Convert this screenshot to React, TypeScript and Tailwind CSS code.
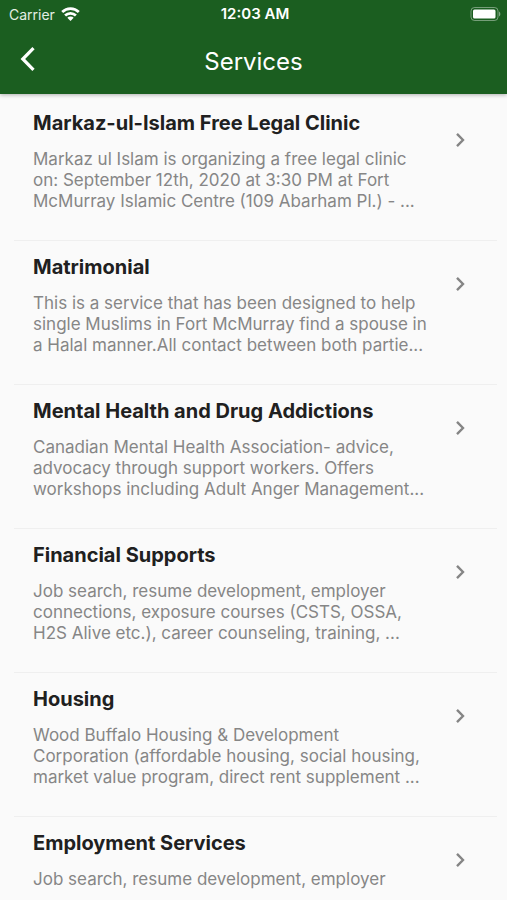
import React from "react";

type Service = { title: string; lines: string[] };

const services: Service[] = [
  {
    title: "Markaz-ul-Islam Free Legal Clinic",
    lines: [
      "Markaz ul Islam is organizing a free legal clinic",
      "on: September 12th, 2020 at 3:30 PM at Fort",
      "McMurray Islamic Centre (109 Abarham Pl.) - ...",
    ],
  },
  {
    title: "Matrimonial",
    lines: [
      "This is a service that has been designed to help",
      "single Muslims in Fort McMurray find a spouse in",
      "a Halal manner.All contact between both partie...",
    ],
  },
  {
    title: "Mental Health and Drug Addictions",
    lines: [
      "Canadian Mental Health Association- advice,",
      "advocacy through support workers. Offers",
      "workshops including Adult Anger Management...",
    ],
  },
  {
    title: "Financial Supports",
    lines: [
      "Job search, resume development, employer",
      "connections, exposure courses (CSTS, OSSA,",
      "H2S Alive etc.), career counseling, training, ...",
    ],
  },
  {
    title: "Housing",
    lines: [
      "Wood Buffalo Housing & Development",
      "Corporation (affordable housing, social housing,",
      "market value program, direct rent supplement ...",
    ],
  },
  {
    title: "Employment Services",
    lines: ["Job search, resume development, employer"],
  },
];

function WifiIcon() {
  return (
    <svg width="19" height="15" viewBox="0 0 19 15" fill="none" stroke="white" strokeWidth="2.7" aria-hidden="true">
      <path d="M1.2 5a11.7 11.7 0 0 1 16.6 0" />
      <path d="M4.1 8.5a7.7 7.7 0 0 1 10.8 0" />
      <path d="M9.5 14 6.3 10.8a4.6 4.6 0 0 1 6.4 0Z" fill="white" stroke="none" />
    </svg>
  );
}

function BatteryIcon() {
  return (
    <svg width="31" height="14" viewBox="0 0 31 14" fill="none" aria-hidden="true">
      <rect x="1" y="0.5" width="27" height="13" rx="3.5" stroke="white" strokeOpacity="0.4" />
      <rect x="3" y="2.5" width="22.5" height="9" rx="1.5" fill="white" />
      <path d="M29 4.5c1.8.8 1.8 4.2 0 5Z" fill="white" fillOpacity="0.45" />
    </svg>
  );
}

function ServiceRow({ service }: { service: Service }) {
  return (
    <li className="mr-2.5 ml-3.5 border-b border-[#efefef]">
      <button type="button" className="flex w-full items-start justify-between pt-3.5 pr-[25px] pb-7 pl-[19px] text-left">
        <span className="flex flex-col gap-3.5">
          <span className="text-[20px] leading-6 font-bold text-[#202020]">{service.title}</span>
          <span className="text-[17px] leading-[21px] text-[#868686]">
            {service.lines.map((line) => (
              <span key={line} className="block whitespace-nowrap">
                {line}
              </span>
            ))}
          </span>
        </span>
        <svg
          className="mt-[19px] shrink-0"
          width="24"
          height="20"
          viewBox="0 0 24 20"
          fill="none"
          stroke="#858585"
          strokeWidth="2.4"
          aria-hidden="true"
        >
          <path d="m9 3.8 6 6.2-6 6.2" />
        </svg>
      </button>
    </li>
  );
}

export default function App() {
  return (
    <div className="h-screen overflow-hidden bg-[#fafafa] font-['Inter',sans-serif]">
      <header className="relative bg-[#1b5e20] text-white shadow-[0_1px_4px_rgba(0,0,0,0.3)]">
        <div className="grid h-7 grid-cols-[1fr_auto_1fr] items-center pr-1.5 pl-[9px]">
          <div className="flex items-center gap-1.5 text-[14px] text-[#e4eee4]">
            <span>Carrier</span>
            <WifiIcon />
          </div>
          <time className="text-center text-[15px] leading-5 font-semibold">12:03 AM</time>
          <div className="flex justify-end">
            <BatteryIcon />
          </div>
        </div>
        <div className="grid h-[66px] grid-cols-[56px_1fr_56px] items-center">
          <button type="button" aria-label="Back" className="flex h-full items-center pb-1 pl-5">
            <svg width="16" height="26" viewBox="0 0 16 26" fill="none" stroke="white" strokeWidth="3.2" aria-hidden="true">
              <path d="M13.5 2.2 2.8 13l10.7 10.8" />
            </svg>
          </button>
          <h1 className="pt-0.5 text-center text-[24px] leading-8">Services</h1>
        </div>
      </header>
      <main>
        <ul className="pt-[3px]">
          {services.map((service) => (
            <ServiceRow key={service.title} service={service} />
          ))}
        </ul>
      </main>
    </div>
  );
}
